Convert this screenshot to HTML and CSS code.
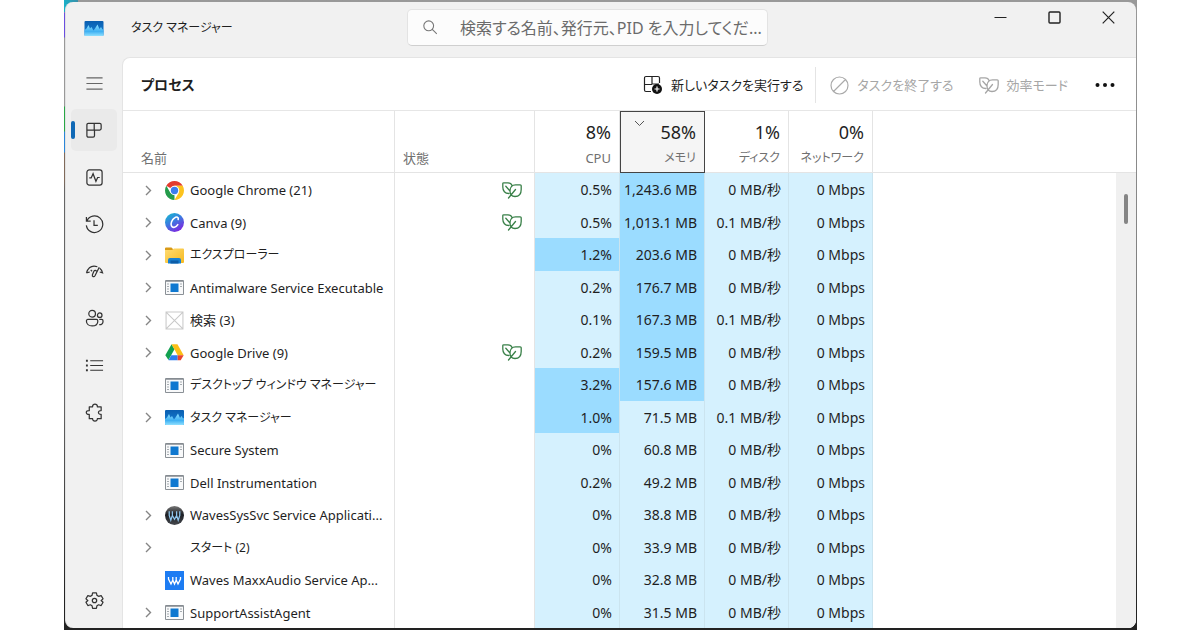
FILE: index.html
```html
<!DOCTYPE html>
<html lang="ja">
<head>
<meta charset="utf-8">
<title>タスク マネージャー</title>
<link rel="stylesheet" href="styles.css">
</head>
<body>
<svg class="sprite" aria-hidden="true">
  <defs>
    <linearGradient id="tmSky" x1="0" y1="0" x2="0" y2="1"><stop offset="0" stop-color="#0a5eb0"/><stop offset="1" stop-color="#1683d8"/></linearGradient>
    <linearGradient id="tmSea" x1="0" y1="0" x2="0" y2="1"><stop offset="0" stop-color="#8fe0ff"/><stop offset=".6" stop-color="#3fb0f2"/><stop offset="1" stop-color="#8fe0ff"/></linearGradient>
    <linearGradient id="canvaBg" x1="0" y1="0" x2=".6" y2="1"><stop offset="0" stop-color="#12c0cd"/><stop offset=".5" stop-color="#3a7de0"/><stop offset="1" stop-color="#7a2be0"/></linearGradient>
    <linearGradient id="folderBg" x1="0" y1="0" x2="1" y2="1"><stop offset="0" stop-color="#ffdc72"/><stop offset="1" stop-color="#f5b921"/></linearGradient>
    <linearGradient id="orb" x1="0" y1="0" x2="0" y2="1"><stop offset="0" stop-color="#777"/><stop offset=".45" stop-color="#1c1f24"/><stop offset="1" stop-color="#45484d"/></linearGradient>
  </defs>
  <symbol id="taskmgr" viewBox="0 0 19 15"><rect width="19" height="15" rx="1" fill="url(#tmSky)"/><path d="M0 9 2 7.500 4 4l1.500 3.500L7 6l2 3.500 1.500-2L13 3.500 15 8l1.500-2L18 8.500l1-.5V14a1 1 0 0 1-1 1H1a1 1 0 0 1-1-1z" fill="url(#tmSea)"/></symbol>
  <symbol id="leaf" viewBox="0 0 20 17"><path d="M6.800 11.500C3 11.500.8 9 .8 5V1.800C.8 1.100 1.100.9 1.800.9H6c2 0 3.500 1 4 2.600M18.200 2.800h-4.700C10 2.800 8 5.500 8 9c0 3.500 2 5.500 5 5.500 4 0 6.200-2.500 6.200-7V3.800c0-.7-.3-1-1-1zM13.500 7.500 6.500 16M3.800 4.300l4 4.500" fill="none" stroke="currentColor" stroke-width="1.300" stroke-linecap="round" stroke-linejoin="round"/></symbol>
  <symbol id="chev" viewBox="0 0 7 11"><path d="M1 1l4.500 4.500L1 10" fill="none" stroke="#858585" stroke-width="1.400"/></symbol>
  <symbol id="exe" viewBox="0 0 19 15"><path d="M.5.5h18v14H.5z" fill="#f8f9fa" stroke="#8a9096"/><path d="M1 1.200h17" stroke="#7b8187"/><path d="M5.500 3.500h8v8.500h-8z" fill="#0f78d0"/><path d="M2 4h2M2 6.500h2M2 9h2M2 11.500h2M15 4h2M15 6.500h2" stroke="#a5abb0"/></symbol>
  <symbol id="chrome" viewBox="0 0 18 18"><circle cx="9" cy="9" r="9" fill="#fff"/><path d="M9 9 1.210 4.500A9 9 0 0 1 16.790 4.500H9z" fill="#e33b2e"/><path d="M9 9v9A9 9 0 0 1 1.210 4.500L5.100 11.200z" fill="#259b4b"/><path d="M9 4.500h7.790A9 9 0 0 1 9 18l3.900-6.700z" fill="#fcc31e"/><circle cx="9" cy="9" r="4.500" fill="#fff"/><circle cx="9" cy="9" r="3.500" fill="#3b7ded"/></symbol>
  <symbol id="canva" viewBox="0 0 18 18"><circle cx="9" cy="9" r="9" fill="url(#canvaBg)"/><path d="M12.500 6.200c.7-2.300-1.500-3-3.400-1.600C6.500 6.400 5 10 6.100 12.200c1.200 2.300 4.300 1.600 6-1.200" fill="none" stroke="#fff" stroke-width="1.500" stroke-linecap="round"/></symbol>
  <symbol id="folder" viewBox="0 0 19 17"><path d="M0 1.500A1 1 0 0 1 1 .5h5.500L9 3H0z" fill="#d99a17"/><path d="M0 3h7l2-1.500h9a1 1 0 0 1 1 1V15a1 1 0 0 1-1 1H1a1 1 0 0 1-1-1z" fill="url(#folderBg)"/><path d="M3 16.500v-3.500A2 2 0 0 1 5 11h9a2 2 0 0 1 2 2v3.500z" fill="#1780d2"/><path d="M5.500 13.500h8V16.500h-8z" fill="#0c5da8"/></symbol>
  <symbol id="blank" viewBox="0 0 18 17"><path d="M1 .5h16v16H1zM1 .5l16 16M17 .5l-16 16" fill="none" stroke="#c9c9c9"/></symbol>
  <symbol id="drive" viewBox="0 0 18 16"><path d="M6.200.3 9 5 3.300 15.200.3 10.500z" fill="#12a150"/><path d="M6.200.3h5.600L17.700 10.500H12z" fill="#fcbf17"/><path d="M3.300 15.400 6 10.500h6v4.900z" fill="#2d7df0"/><path d="M12 10.500h5.700l-2.800 4.900H12z" fill="#e8432f"/></symbol>
  <symbol id="waveorb" viewBox="0 0 18 18"><circle cx="9" cy="9" r="9" fill="url(#orb)"/><path d="M4 5v4l1.500 4.500L7 9V5M7 9l2 3.500L11 9V5M11 9l1.500 4.500L14 9V5" fill="none" stroke="#8fc5ec" stroke-width="1.200"/></symbol>
  <symbol id="wavesq" viewBox="0 0 19 19"><path d="M0 0h19v19H0z" fill="#1d7cf2"/><path d="M3.500 6v2l2.500 5 1.800-4V6M7.800 9l1.700 4 1.700-4V6M11.200 9l1.800 4 2.500-5V6" fill="none" stroke="#fff" stroke-width="1.300"/></symbol>
</svg>

<div class="desktop">
<main class="window">
  <header class="titlebar">
    <div class="brand">
      <svg class="brand-icon" aria-hidden="true"><use href="#taskmgr"/></svg>
      <span>タスク マネージャー</span>
    </div>
    <label class="search">
      <svg width="15" height="15" viewBox="0 0 15 15" aria-hidden="true"><path d="M10.600 5.800a4.900 4.900 0 1 1-9.800 0 4.900 4.900 0 0 1 9.800 0zM9.300 9.300l4.500 4.500" fill="none" stroke="#777" stroke-width="1.100"/></svg>
      <input type="text" aria-label="検索" placeholder="検索する名前、発行元、PID を入力してくだ...">
    </label>
    <div class="controls">
      <button aria-label="最小化"><svg width="13" height="13" viewBox="0 0 13 13"><path d="M.5 6.500h12" stroke="#222" fill="none"/></svg></button>
      <button aria-label="最大化"><svg width="13" height="13" viewBox="0 0 13 13"><rect x="1" y="1" width="11" height="11" rx="1" fill="none" stroke="#222" stroke-width="1.400"/></svg></button>
      <button aria-label="閉じる"><svg width="13" height="13" viewBox="0 0 13 13"><path d="M.7.700l11.600 11.600M12.300.700.7 12.300" fill="none" stroke="#222" stroke-width="1.200"/></svg></button>
    </div>
  </header>

  <div class="body">
    <nav class="rail">
      <button aria-label="メニュー"><svg viewBox="0 0 20 20"><path d="M1.500 4h17M1.500 10h17M1.500 16h17" stroke="#666"/></svg></button>
      <button class="active" aria-label="プロセス"><svg viewBox="0 0 20 20"><path d="M3.500 2.500h12a1.500 1.500 0 0 1 1.500 1.500v4a1.500 1.500 0 0 1-1.500 1.500H10v6A1.500 1.500 0 0 1 8.500 17h-5A1.500 1.500 0 0 1 2 15.500V4a1.500 1.500 0 0 1 1.500-1.500zM2 9.500h8M9.700 2.500v7"/></svg></button>
      <button aria-label="パフォーマンス"><svg viewBox="0 0 20 20"><rect x="2" y="2" width="16" height="16" rx="2.500"/><path d="M4.500 10.500h2l2-4.500 3 8 1.800-4h2.200"/></svg></button>
      <button aria-label="アプリの履歴"><svg viewBox="0 0 20 20"><path d="M1.500 2v4.500H6M2 6.300a8.700 8.700 0 1 1-.6 4.700M9.500 5.500v5.300h4"/></svg></button>
      <button aria-label="スタートアップ アプリ"><svg viewBox="0 0 20 20"><path d="M1.500 11.500C3.500 5.500 8 3.500 13 5M1.500 11.500l3.500-1M15.500 6.500c1.500 1 2.500 3 3 5l-3-1M6 8.500l1.500 1.200M15 5.500l-4.500 9c-1 1.800-3.300.8-2.700-1L9.500 9.500c.6-1.200 2.500-1 2.500.5"/></svg></button>
      <button aria-label="ユーザー"><svg viewBox="0 0 20 20"><circle cx="7.500" cy="5" r="3.500"/><circle cx="15.500" cy="6.500" r="2.400"/><path d="M3 11h9a1.500 1.500 0 0 1 1.500 1.500c0 3.500-2.500 5.300-6 5.300s-6-1.800-6-5.300A1.500 1.500 0 0 1 3 11zM15 11h2.500a1.500 1.500 0 0 1 1.500 1.500c0 2.300-1.500 4-4 4"/></svg></button>
      <button aria-label="詳細"><svg viewBox="0 0 20 20"><path d="M5.500 5H19M5.500 10H19M5.500 15H19"/><path d="M1 5h2M1 10h2M1 15h2" stroke-width="2"/></svg></button>
      <button aria-label="サービス"><svg viewBox="0 0 20 20"><path d="M4.500 4h3.500c-.4-3.800 5.400-3.800 5 0h4v4c-3.800-.3-3.800 4.300 0 4v4.500h-4c.3 3.500-5.300 3.500-5 0H4.500V12c-4.200.3-4.200-4.300 0-4z" stroke-linejoin="round"/></svg></button>
      <button class="settings" aria-label="設定"><svg viewBox="0 0 20 20"><path d="M8 2h4l.6 2.600 1.700 1L17 4.800l2 3.500-2 1.700 2 1.900-2 3.400-2.700-.8-1.700 1L12 18.200H8l-.6-2.700-1.700-1-2.700.8-2-3.400L3 10 1 8.300l2-3.500 2.700.8 1.700-1z" stroke-linejoin="round"/><circle cx="10" cy="10" r="2.300"/></svg></button>
    </nav>

    <section class="panel">
      <div class="toolbar">
        <h1>プロセス</h1>
        <button class="tool run"><svg width="20" height="20" viewBox="0 0 20 20" aria-hidden="true"><path d="M8 16.500H3A1.500 1.500 0 0 1 1.500 15V3A1.500 1.500 0 0 1 3 1.500h12A1.500 1.500 0 0 1 16.500 3v5M1.500 9.500H9M9 1.500v7.500M16 9H9" fill="none" stroke="#222" stroke-width="1.200"/><circle cx="14" cy="14" r="5" fill="#111"/><path d="M14 11.500v5M11.500 14h5" stroke="#fff" stroke-width="1.200"/></svg>新しいタスクを実行する</button>
        <button class="tool end" disabled><svg width="19" height="19" viewBox="0 0 19 19" aria-hidden="true"><path d="M18 9.500a8.500 8.500 0 1 1-17 0 8.500 8.500 0 0 1 17 0zM3.500 15.500l12-12" fill="none" stroke="#aaa" stroke-width="1.200"/></svg>タスクを終了する</button>
        <button class="tool eco" disabled><svg width="20" height="17" aria-hidden="true"><use href="#leaf"/></svg>効率モード</button>
        <button class="tool more" aria-label="その他"><svg width="20" height="6" viewBox="0 0 20 6"><g fill="#111"><circle cx="2.500" cy="3" r="2"/><circle cx="10" cy="3" r="2"/><circle cx="17.500" cy="3" r="2"/></g></svg></button>
      </div>

      <div class="sheet">
        <div class="grid">
        <table>
          <colgroup><col class="c-name"><col class="c-status"><col class="c-num"><col class="c-num"><col class="c-io"><col class="c-io"><col></colgroup>
          <thead>
            <tr>
              <th class="left">名前</th>
              <th class="left tight">状態</th>
              <th><b>8%</b>CPU</th>
              <th class="sorted kana" aria-sort="descending"><svg class="sort" width="11" height="7" viewBox="0 0 11 7" aria-hidden="true"><path d="M1 1l4.500 4.500L10 1" fill="none" stroke="#555"/></svg><b>58%</b>メモリ</th>
              <th class="kana"><b>1%</b>ディスク</th>
              <th class="kana"><b>0%</b>ネットワーク</th>
              <th class="rest"></th>
            </tr>
          </thead>
          <tbody>
            <tr><td><div class="proc"><button aria-label="展開"><svg><use href="#chev"/></svg></button><svg class="app"><use href="#chrome"/></svg><span>Google Chrome (21)</span></div></td><td class="st"><svg class="leaf"><use href="#leaf"/></svg></td><td>0.5%</td><td class="hot">1,243.6 MB</td><td>0 MB/秒</td><td>0 Mbps</td><td></td></tr>
            <tr><td><div class="proc"><button aria-label="展開"><svg><use href="#chev"/></svg></button><svg class="app"><use href="#canva"/></svg><span>Canva (9)</span></div></td><td class="st"><svg class="leaf"><use href="#leaf"/></svg></td><td>0.5%</td><td class="hot">1,013.1 MB</td><td>0.1 MB/秒</td><td>0 Mbps</td><td></td></tr>
            <tr><td><div class="proc"><button aria-label="展開"><svg><use href="#chev"/></svg></button><svg class="app"><use href="#folder"/></svg><span class="kana">エクスプローラー</span></div></td><td class="st"></td><td class="hot">1.2%</td><td class="hot">203.6 MB</td><td>0 MB/秒</td><td>0 Mbps</td><td></td></tr>
            <tr><td><div class="proc"><button aria-label="展開"><svg><use href="#chev"/></svg></button><svg class="app"><use href="#exe"/></svg><span>Antimalware Service Executable</span></div></td><td class="st"></td><td>0.2%</td><td class="hot">176.7 MB</td><td>0 MB/秒</td><td>0 Mbps</td><td></td></tr>
            <tr><td><div class="proc"><button aria-label="展開"><svg><use href="#chev"/></svg></button><svg class="app"><use href="#blank"/></svg><span>検索 (3)</span></div></td><td class="st"></td><td>0.1%</td><td class="hot">167.3 MB</td><td>0.1 MB/秒</td><td>0 Mbps</td><td></td></tr>
            <tr><td><div class="proc"><button aria-label="展開"><svg><use href="#chev"/></svg></button><svg class="app"><use href="#drive"/></svg><span>Google Drive (9)</span></div></td><td class="st"><svg class="leaf"><use href="#leaf"/></svg></td><td>0.2%</td><td class="hot">159.5 MB</td><td>0 MB/秒</td><td>0 Mbps</td><td></td></tr>
            <tr><td><div class="proc single"><svg class="app"><use href="#exe"/></svg><span class="kana">デスクトップ ウィンドウ マネージャー</span></div></td><td class="st"></td><td class="hot">3.2%</td><td class="hot">157.6 MB</td><td>0 MB/秒</td><td>0 Mbps</td><td></td></tr>
            <tr><td><div class="proc"><button aria-label="展開"><svg><use href="#chev"/></svg></button><svg class="app"><use href="#taskmgr"/></svg><span class="kana">タスク マネージャー</span></div></td><td class="st"></td><td class="hot">1.0%</td><td>71.5 MB</td><td>0.1 MB/秒</td><td>0 Mbps</td><td></td></tr>
            <tr><td><div class="proc single"><svg class="app"><use href="#exe"/></svg><span>Secure System</span></div></td><td class="st"></td><td>0%</td><td>60.8 MB</td><td>0 MB/秒</td><td>0 Mbps</td><td></td></tr>
            <tr><td><div class="proc single"><svg class="app"><use href="#exe"/></svg><span>Dell Instrumentation</span></div></td><td class="st"></td><td>0.2%</td><td>49.2 MB</td><td>0 MB/秒</td><td>0 Mbps</td><td></td></tr>
            <tr><td><div class="proc"><button aria-label="展開"><svg><use href="#chev"/></svg></button><svg class="app"><use href="#waveorb"/></svg><span>WavesSysSvc Service Applicati...</span></div></td><td class="st"></td><td>0%</td><td>38.8 MB</td><td>0 MB/秒</td><td>0 Mbps</td><td></td></tr>
            <tr><td><div class="proc"><button aria-label="展開"><svg><use href="#chev"/></svg></button><svg class="app"></svg><span class="kana">スタート (2)</span></div></td><td class="st"></td><td>0%</td><td>33.9 MB</td><td>0 MB/秒</td><td>0 Mbps</td><td></td></tr>
            <tr><td><div class="proc single"><svg class="app"><use href="#wavesq"/></svg><span>Waves MaxxAudio Service Ap...</span></div></td><td class="st"></td><td>0%</td><td>32.8 MB</td><td>0 MB/秒</td><td>0 Mbps</td><td></td></tr>
            <tr><td><div class="proc"><button aria-label="展開"><svg><use href="#chev"/></svg></button><svg class="app"><use href="#exe"/></svg><span>SupportAssistAgent</span></div></td><td class="st"></td><td>0%</td><td>31.5 MB</td><td>0 MB/秒</td><td>0 Mbps</td><td></td></tr>
          </tbody>
        </table>
        </div>
        <div class="scroll"><div class="scroll-head"></div><div class="track"><div class="thumb"></div></div></div>
      </div>
    </section>
  </div>
</main>
</div>
</body>
</html>
```
FILE: styles.css
```css
* { box-sizing: border-box; }

body {
  margin: 0;
  height: 100vh;
  padding: 0 63px 0 64px;
  background: #fff;
  color: #1f1f1f;
  font: 14px/20px "Noto Sans", "Noto Sans CJK JP", sans-serif;
  font-feature-settings: "palt";
  display: flex;
}

button {
  border: 0;
  padding: 0;
  margin: 0;
  background: none;
  font: inherit;
  color: inherit;
  font-feature-settings: inherit;
}

svg { display: block; flex: none; }
.sprite { position: absolute; width: 0; height: 0; }

.desktop {
  flex: 1;
  min-width: 0;
  display: flex;
  padding: 2px 1px 2px 1px;
  background:
    linear-gradient(90deg, #18b0c8, #3a8fa8) 0 0 / 14px 12px no-repeat,
    linear-gradient(#999 12px, #6a4ee0 13px 37px, #999 38px 106px, #28a745 107px 131px, #2a86d8 132px 152px, #806a5a 153px 180px, #666 190px 400px, #222 600px) 0 0 / 10px 100% no-repeat,
    linear-gradient(#999, #777 60%, #222 97%);
}

.window {
  flex: 1;
  min-width: 0;
  display: flex;
  flex-direction: column;
  background: #f1f1f1;
  border-left: 1px solid #e2e2e2;
  border-radius: 8px;
  overflow: hidden;
}

.titlebar {
  flex: none;
  height: 55px;
  display: grid;
  grid-template-columns: minmax(0, 341fr) minmax(0, 361fr) minmax(0, 368fr);
}
.brand { display: flex; align-items: center; gap: 27px; padding: 0 0 3px 18px; font-size: 12px; }
.brand-icon { width: 20px; height: 15px; }
.search {
  height: 37px;
  margin-top: 7px;
  display: flex;
  align-items: center;
  gap: 22px;
  padding: 0 2px 0 15px;
  background: #fcfcfc;
  border: 1px solid #e3e3e3;
  border-bottom-color: #cfcfcf;
  border-radius: 5px;
}
.search input {
  flex: 1;
  min-width: 0;
  border: 0;
  padding: 0;
  outline: 0;
  background: none;
  font: inherit;
  font-size: 16px;
  line-height: 24px;
  font-feature-settings: inherit;
}
.search input::placeholder { color: #6b6b6b; opacity: 1; }
.controls { display: flex; justify-content: flex-end; padding-right: 1px; }
.controls button { width: 54px; height: 31px; display: grid; place-items: center; }

.body { flex: 1; min-height: 0; display: flex; }

.rail {
  flex: none;
  width: 56px;
  padding: 5px 5px 7px;
  display: flex;
  flex-direction: column;
  gap: 5px;
}
.rail button { height: 42px; display: grid; place-items: center; border-radius: 5px; }
.rail svg { width: 19px; height: 19px; fill: none; stroke: #333; stroke-width: 1.3; }
.rail .active { background: #eaeaea; position: relative; }
.rail .active::before {
  content: "";
  position: absolute;
  left: 0;
  top: 12px;
  width: 4px;
  height: 18px;
  border-radius: 2px;
  background: #0f68b5;
}
.rail .settings { margin-top: auto; }

.panel {
  flex: 1;
  min-width: 0;
  display: flex;
  flex-direction: column;
  background: #fff;
  border: 1px solid #e4e4e4;
  border-width: 1px 0 0 1px;
  border-top-left-radius: 8px;
  overflow: hidden;
}

.toolbar {
  flex: none;
  height: 53px;
  display: flex;
  align-items: center;
  padding: 2px 21px 0 18px;
  border-bottom: 1px solid #e6e6e6;
}
.toolbar h1 { margin: 0 auto 0 0; font-size: 14px; line-height: 20px; font-weight: 600; }
.tool { display: flex; align-items: center; gap: 8px; font-size: 13px; height: 36px; white-space: nowrap; }
.tool:disabled { color: #a6a6a6; }
.run { padding-right: 12px; border-right: 1px solid #e4e4e4; }
.end { padding-left: 14px; }
.eco { margin-left: 25px; }
.more { margin-left: 27px; }

.sheet { flex: 1; min-height: 0; display: flex; }
.grid { flex: 1; min-width: 0; }
table {
  width: 100%;
  height: 100%;
  table-layout: fixed;
  border-collapse: separate;
  border-spacing: 0;
}
.c-name { width: 272px; }
.c-status { width: 140px; }
.c-num { width: 85px; }
.c-io { width: 84px; }

th {
  height: 62px;
  padding: 0 8px 4px 0;
  vertical-align: bottom;
  text-align: right;
  font-weight: 400;
  font-size: 13px;
  line-height: 20px;
  color: #707070;
  border-right: 1px solid #e4e4e4;
  border-bottom: 1px solid #e4e4e4;
}
th b { display: block; font-weight: 400; font-size: 18px; line-height: 24px; margin-bottom: 4px; color: #1f1f1f; }
th.left { text-align: left; padding-left: 18px; }
th.tight { padding-left: 8px; }
th.sorted { position: relative; border: 1px solid #444; background: #f5f5f5; }
th.rest { border-right: 0; }
.kana { font-size: 12px; }
.sort { position: absolute; left: 13px; top: 8px; }

td { padding: 2px 7px 0 0; text-align: right; white-space: nowrap; background: #d5f1fe; border-right: 1px solid #cbe4ef; }
td:first-child, td.st, td:last-child { background: #fff; border-right-color: #e4e4e4; }
td:last-child { border-right: 0; }
td.st { padding-right: 12px; }
td.hot { background: #9bdcff; }

.proc { display: flex; align-items: center; padding-left: 22px; font-size: 13px; }
.proc.single { padding-left: 42px; }
.proc button { width: 7px; height: 11px; margin-right: 13px; }
.proc button svg { width: 7px; height: 11px; }
.app { width: 19px; height: 19px; margin-right: 6px; }
.leaf { width: 20px; height: 17px; margin-left: auto; color: #398048; }

.scroll { flex: none; width: 20px; display: flex; flex-direction: column; }
.scroll-head { height: 62px; border-bottom: 1px solid #e4e4e4; }
.track { flex: 1; background: #f0f0f0; padding: 21px 8px 0; }
.thumb { width: 4px; height: 30px; border-radius: 2px; background: #858585; }
```
